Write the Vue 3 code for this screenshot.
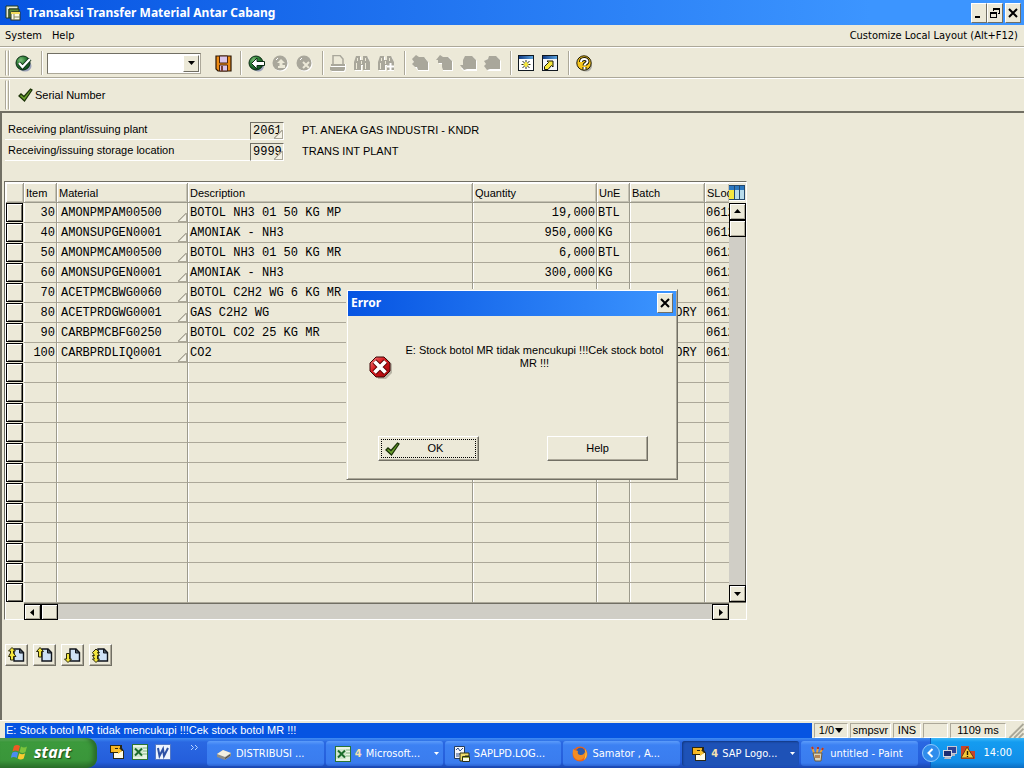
<script setup>
import { ref } from 'vue'

const command = ref('')
const plant = ref('2061')
const storage = ref('9999')

const toolGroups = [
  [
    { id: 'back', label: 'Back' },
    { id: 'exit', label: 'Exit', off: true },
    { id: 'cancel', label: 'Cancel', off: true },
  ],
  [
    { id: 'print', label: 'Print', off: true },
    { id: 'find', label: 'Find', off: true },
    { id: 'findnext', label: 'Find next', off: true },
  ],
  [
    { id: 'pfirst', label: 'First page', off: true },
    { id: 'pprev', label: 'Previous page', off: true },
    { id: 'pnext', label: 'Next page', off: true },
    { id: 'plast', label: 'Last page', off: true },
  ],
  [
    { id: 'session', label: 'New session' },
    { id: 'shortcut', label: 'Create shortcut' },
  ],
  [{ id: 'help', label: 'Help' }],
]

const items = [
  ['30', 'AMONPMPAM00500', 'BOTOL NH3 01 50 KG MP', '19,000', 'BTL', '', '0612'],
  ['40', 'AMONSUPGEN0001', 'AMONIAK - NH3', '950,000', 'KG', '', '0612'],
  ['50', 'AMONPMCAM00500', 'BOTOL NH3 01 50 KG MR', '6,000', 'BTL', '', '0612'],
  ['60', 'AMONSUPGEN0001', 'AMONIAK - NH3', '300,000', 'KG', '', '0612'],
  ['70', 'ACETPMCBWG0060', 'BOTOL C2H2 WG 6 KG MR', '', '', '', '0612'],
  ['80', 'ACETPRDGWG0001', 'GAS C2H2 WG', '', '', 'INVENTORY', '0612'],
  ['90', 'CARBPMCBFG0250', 'BOTOL CO2 25 KG MR', '', '', '', '0612'],
  ['100', 'CARBPRDLIQ0001', 'CO2', '', '', 'INVENTORY', '0612'],
]
const rows = Array.from({ length: 20 }, (_, i) => items[i] || ['', '', '', '', '', '', ''])

const pageButtons = [
  { id: 'first', label: 'First page' },
  { id: 'prev', label: 'Previous page' },
  { id: 'next', label: 'Next page' },
  { id: 'last', label: 'Last page' },
]

const tasks = [
  { icon: 't-drive', text: 'DISTRIBUSI ...' },
  { icon: 't-excel', count: '4', text: 'Microsoft...', more: true },
  { icon: 't-saplpd', text: 'SAPLPD.LOG...' },
  { icon: 't-fox', text: 'Samator , A...' },
  { icon: 't-sap', count: '4', text: 'SAP Logo...', more: true, active: true },
  { icon: 't-paint', text: 'untitled - Paint' },
]
</script>

<template>
  <div class="screen">
    <svg class="defs" aria-hidden="true">
      <defs>
        <radialGradient id="gGreen" cx="35%" cy="30%" r="75%">
          <stop offset="0" stop-color="#7fc07a" />
          <stop offset=".45" stop-color="#2f8038" />
          <stop offset="1" stop-color="#0d4a1c" />
        </radialGradient>
        <linearGradient id="gRed" x1="0" y1="0" x2="1" y2="1">
          <stop offset="0" stop-color="#f58a8a" />
          <stop offset=".4" stop-color="#d81c20" />
          <stop offset="1" stop-color="#9c0408" />
        </linearGradient>
        <linearGradient id="gBlue" x1="0" x2="1">
          <stop offset="0" stop-color="#123c86" />
          <stop offset="1" stop-color="#5aa2dc" />
        </linearGradient>

        <symbol id="window-logo" viewBox="0 0 16 16">
          <path d="M1 1h12v3H4v9H1z" fill="#e8ecd0" stroke="#20381c" />
          <path d="M4 4h10v3H7v6H4z" fill="#5c8a3c" stroke="#20381c" />
          <rect x="6" y="7" width="9" height="8" fill="#f8f8e8" stroke="#30341c" />
          <path d="M6 7h9v2H6z" fill="#f2d95a" />
          <path d="M9 9v6M9 12h6" stroke="#88885c" />
        </symbol>
        <symbol id="ok" viewBox="0 0 17 17">
          <ellipse cx="10" cy="11" rx="6.5" ry="5.5" fill="#9aa0b8" />
          <circle cx="8" cy="8" r="7" fill="url(#gGreen)" stroke="#0c2c14" />
          <path d="M4 8l3.500 4L15 4" fill="none" stroke="#0c2c14" stroke-width="4" />
          <path d="M4 8l3.500 4L15 4" fill="none" stroke="#fff" stroke-width="2.400" />
        </symbol>
        <symbol id="save" viewBox="0 0 17 17">
          <path d="M1 1h15v15H3l-2-2z" fill="#ee8c14" stroke="#281404" stroke-width="1.200" />
          <path d="M4.500 1h8v7h-8z" fill="#d9c4ea" stroke="#4a2410" />
          <path d="M4.500 10h8v6h-8z" fill="#d9c4ea" stroke="#4a2410" />
          <path d="M6 11h2v5H6z" fill="#7a4038" />
        </symbol>
        <symbol id="back" viewBox="0 0 17 17">
          <ellipse cx="10" cy="11" rx="6" ry="5.5" fill="#9aa0b8" />
          <circle cx="8" cy="8" r="7" fill="url(#gGreen)" stroke="#0c2c14" />
          <path d="M3.500 8.500L9 3v3.500h7.500v4H9V14z" fill="#fff" stroke="#0c2c14" />
        </symbol>
        <symbol id="exit" viewBox="0 0 17 17">
          <circle cx="9" cy="9" r="7.500" fill="#fff" />
          <circle cx="8" cy="8" r="7.500" fill="#a9a79b" />
          <path d="M9 4l4 4h-2.500v2H13v3H6v-2h1.500V8H5z" fill="#ece9d8" />
          <path d="M4 5l2-2" stroke="#fff" />
        </symbol>
        <symbol id="cancel" viewBox="0 0 17 17">
          <circle cx="9" cy="9" r="7.500" fill="#fff" />
          <circle cx="8" cy="8" r="7.500" fill="#a9a79b" />
          <path d="M7 7l6 6M13 7l-6 6" stroke="#ece9d8" stroke-width="2" />
          <path d="M4 5l2-2" stroke="#fff" />
        </symbol>
        <symbol id="print" viewBox="0 0 17 17">
          <path d="M5 1h6l2 2v6h3v5l-1 3H2l-1-2V10h3z" fill="#fff" />
          <path d="M3 9V.500h7L13 4v5" fill="#ece9d8" stroke="#a9a79b" stroke-width="1.500" />
          <path d="M1 9h14v2H1zM0 12h15v2l-1 2H2l-2-1z" fill="#a9a79b" />
        </symbol>
        <symbol id="find" viewBox="0 0 17 17">
          <path d="M3 2h4v4h3V2h4l2 6v8h-6v-5H8v5H1V8z" fill="#fff" />
          <path d="M2 1h4v4h3V1h4l3 6v8H9v-5H7v5H0V7z" fill="#a9a79b" />
          <path d="M3.500 3v3M2.500 8v6M11.500 3v3M11.500 8v6M7.500 6v3" stroke="#ece9d8" />
        </symbol>
        <symbol id="findnext" viewBox="0 0 17 17">
          <path d="M3 2h4v4h3V2h4l2 6v8h-6v-5H8v5H1V8z" fill="#fff" />
          <path d="M2 1h4v4h3V1h4l3 6v8H9v-5H7v5H0V7z" fill="#a9a79b" />
          <path d="M3.500 3v3M2.500 8v6M11.500 3v3M7.500 6v3" stroke="#ece9d8" />
          <path d="M12.500 8v7M9 11.500h7" stroke="#fff" stroke-width="2" />
        </symbol>
        <symbol id="pfirst" viewBox="0 0 17 17">
          <path d="M3 2l3 1h7l4 5v8H6l-2-3-3-3 2-2-2-2z" fill="#fff" />
          <path d="M0 4l4-4 3 2h5l4 5v8H6l-1-3H3L0 9l2-2z" fill="#a9a79b" />
        </symbol>
        <symbol id="pprev" viewBox="0 0 17 17">
          <path d="M2 5l4-3h7l4 5v9H7V9H3z" fill="#fff" />
          <path d="M0 5l4-5 3 2h5l4 4v9H7l-1-3V8H2V5z" fill="#a9a79b" />
        </symbol>
        <symbol id="pnext" viewBox="0 0 17 17">
          <path d="M6 2h7l4 4v10H4l-3-3h3z" fill="#fff" />
          <path d="M5 1h7l4 4v9H7l-3 1-4-5h3V5z" fill="#a9a79b" />
        </symbol>
        <symbol id="plast" viewBox="0 0 17 17">
          <path d="M6 2h7l4 4v10H4l-3-4 2-2-2-4z" fill="#fff" />
          <path d="M5 1h7l4 4v9H6l-3 1-3-4 2-2-2-3 4-2z" fill="#a9a79b" />
        </symbol>
        <symbol id="session" viewBox="0 0 17 17">
          <rect x=".5" y=".5" width="15" height="15" fill="#fff" stroke="#101820" />
          <path d="M1 1h14v3H1z" fill="url(#gBlue)" />
          <path d="M8 5v9M3.500 9.500h9M4.500 6l7 7M11.500 6l-7 7" stroke="#2c3020" />
          <path d="M8 7v5M5.500 9.500h5" stroke="#f6e83c" stroke-width="2" />
        </symbol>
        <symbol id="shortcut" viewBox="0 0 17 17">
          <rect x=".5" y=".5" width="15" height="15" fill="#f4f6fa" stroke="#101820" />
          <path d="M1 1h14v3H1z" fill="url(#gBlue)" />
          <path d="M2.500 14.500v-3l4-4L5 6h6v6L9.500 10.500 6 14.500z" fill="#f6e83c" stroke="#181808" />
        </symbol>
        <symbol id="help" viewBox="0 0 17 17">
          <ellipse cx="10" cy="11" rx="6" ry="5.500" fill="#a8a8a0" />
          <circle cx="8" cy="8" r="7.200" fill="#f7c61c" stroke="#1c1804" />
          <path d="M5 7c0-4 6.500-4 6.500-.5 0 2-3 2-3 4M8.500 12v2.500" fill="none" stroke="#1c1804" stroke-width="4" />
          <path d="M5 7c0-4 6.500-4 6.500-.5 0 2-3 2-3 4M8.500 12v2.500" fill="none" stroke="#fff" stroke-width="2" />
        </symbol>
        <symbol id="tick" viewBox="0 0 16 14">
          <path d="M1 8l2-2 3 2.500L12.500 1l1.500 1L6.500 13z" fill="#6aa02c" stroke="#1c3408" stroke-width="1.300" />
        </symbol>
        <symbol id="error" viewBox="0 0 24 24">
          <path d="M8 2h9l6 6v9l-6 6H9z" fill="#b8b5a6" />
          <path d="M7 1h8l6 6v8l-6 6H7l-6-6V7z" fill="url(#gRed)" stroke="#3c0404" />
          <path d="M5.500 5.500l11 11M16.500 5.500l-11 11" stroke="#500" stroke-width="5.500" />
          <path d="M5.500 5.500l11 11M16.500 5.500l-11 11" stroke="#fff" stroke-width="3.800" />
        </symbol>
        <symbol id="columns" viewBox="0 0 16 16">
          <rect width="16" height="16" fill="#fff" />
          <path d="M0 1h16v4H0z" fill="#2c78c0" />
          <path d="M0 5h5v9H0z" fill="#f4e640" />
          <path d="M6 5h4v9H6zM11 5h4v9h-4z" fill="#b8dcec" />
          <path d="M5.500 1v13M10.500 1v13M15.500 1v13M0 .5h16M0 14.500h16" stroke="#24486c" />
        </symbol>

        <symbol id="sheet" viewBox="0 0 17 17">
          <path d="M6 2h6l3.500 3.500V14H6z" fill="#cfe2f6" stroke="#10141c" stroke-width="1.400" />
          <path d="M11.500 2v4h4z" fill="#50606c" stroke="#10141c" />
        </symbol>
        <symbol id="first" viewBox="0 0 17 17">
          <use href="#sheet" />
          <path d="M4 .5L7.500 4H5.500v2L8 9.500H5.500V13h-3V9.500H.5L2.500 6V4h-2z" fill="#f4e63c" stroke="#2a2808" />
        </symbol>
        <symbol id="prev" viewBox="0 0 17 17">
          <use href="#sheet" />
          <path d="M4 .5L7.500 4.500H5.500V10h-3V4.500H.5z" fill="#f4e63c" stroke="#2a2808" />
        </symbol>
        <symbol id="next" viewBox="0 0 17 17">
          <use href="#sheet" />
          <path d="M4 15.500L.5 12h2V6.500h3V12h2z" fill="#f4e63c" stroke="#2a2808" />
        </symbol>
        <symbol id="last" viewBox="0 0 17 17">
          <use href="#sheet" />
          <path d="M4 15.500L.5 12h2L.5 8.500h2L.5 5.500 4 2l3.500 3.500h-2l2 3h-2V12h2z" fill="#f4e63c" stroke="#2a2808" />
        </symbol>

        <symbol id="flag" viewBox="0 0 18 18">
          <path d="M3 3q3-2 6 0L7.500 8.500q-3-2-6 0z" fill="#ee5a24" />
          <path d="M10 3.500q3 2 6 0L14.500 9q-3 2-6 0z" fill="#7cc43c" />
          <path d="M1.200 9.700q3-2 6 0L5.700 15q-3-2-6 0z" fill="#4a8cf0" />
          <path d="M8.200 10.200q3 2 6 0L12.700 15.500q-3 2-6 0z" fill="#f8cc30" />
        </symbol>
        <symbol id="t-sap" viewBox="0 0 16 16">
          <path d="M1 1h12v3l2 3v8H4V9H1z" fill="#2c2814" />
          <path d="M2 2h9v2H6v4H2z" fill="#f5b422" />
          <path d="M5 9h4l4-2h1v7H5z" fill="#fffbe6" />
          <path d="M5 5h4V3l4 4-4 3V8H5z" fill="#f9c02c" />
        </symbol>
        <symbol id="t-excel" viewBox="0 0 16 16">
          <rect x=".5" y=".5" width="15" height="15" fill="#e8f4e4" stroke="#2c7434" />
          <path d="M11 4h4M11 7h4M11 10h4" stroke="#7cb47c" />
          <rect x="1" y="3" width="10" height="10" fill="#cfe6cc" />
          <path d="M3 4.500l7 7M10 4.500l-7 7" stroke="#1c6c2c" stroke-width="2" />
        </symbol>
        <symbol id="t-word" viewBox="0 0 16 16">
          <rect x=".5" y=".5" width="15" height="15" fill="#eef4fe" stroke="#5478c4" />
          <path d="M3 4l1.500 8L8 5l1 7 4-8" fill="none" stroke="#2c50a4" stroke-width="2" />
        </symbol>
        <symbol id="t-drive" viewBox="0 0 16 16">
          <path d="M1 8l6-4 8 3v3l-6 4-8-3z" fill="#8c8c88" />
          <path d="M1 8l6-4 8 3-6 4z" fill="#f2efe2" />
          <path d="M9 12.500l5-3.500" stroke="#4c4c48" />
        </symbol>
        <symbol id="t-saplpd" viewBox="0 0 16 16">
          <path d="M.5.500h10v12H.5z" fill="#f4f6fa" stroke="#243c5c" />
          <path d="M2 4l2-2 2 3 3-3M2 8h5M2 10h3" fill="none" stroke="#2c4c8c" />
          <path d="M6 7h9v3h-4v5H6z" fill="#f0dc6c" stroke="#2c3014" />
          <path d="M8.500 10.500h7v5h-7z" fill="#fbfbe4" stroke="#2c3014" />
          <path d="M9 11h6v1H9z" fill="#9aa83c" />
        </symbol>
        <symbol id="t-fox" viewBox="0 0 16 16">
          <circle cx="8" cy="8" r="7.500" fill="#e8641c" />
          <circle cx="8.500" cy="6.500" r="4.700" fill="#2c5cae" />
          <path d="M1 3c2 2 3 1 5 2-1 3 1 4 3 4 2 0 3-1 4-3 1 5-2 8-6 8-4 0-7-4-6-11z" fill="#f28c24" />
          <path d="M13 3c3 4 2 9-1 11 1-3 2-6 1-11z" fill="#fbc63c" />
        </symbol>
        <symbol id="t-paint" viewBox="0 0 16 16">
          <path d="M4 7L2 1M7 7l1-6M10 7l3-5" stroke="#e8a43c" stroke-width="2" />
          <path d="M2 1l1 2M8 1v2M13 2l-1 2" stroke="#b4342c" stroke-width="2" />
          <path d="M3 7h9l-1 8H5z" fill="#d9d2ba" stroke="#6c5c3c" />
          <path d="M5 9h5v3H5z" fill="#b48454" />
        </symbol>
        <symbol id="t-net" viewBox="0 0 16 16">
          <rect x="5.500" y="1.500" width="9" height="7" fill="#2c4498" stroke="#c4c8d4" />
          <path d="M8 9h5v2H8z" fill="#b4b8c4" />
          <rect x="1.500" y="5.500" width="8" height="6" fill="#1c2c70" stroke="#d4d8e0" />
          <path d="M3 12h6v2H2z" fill="#b4b8c4" />
        </symbol>
        <symbol id="t-warn" viewBox="0 0 16 16">
          <path d="M1 1h8v5h6v8H1z" fill="#c8442c" />
          <path d="M7 2l7 11H1z" fill="#f6c838" stroke="#6c3c10" />
          <path d="M7.500 6v4M7.500 11v1" stroke="#201804" stroke-width="1.400" />
        </symbol>
      </defs>
    </svg>

    <header class="titlebar">
      <svg class="i16"><use href="#window-logo" /></svg>
      <h1>Transaksi Transfer Material Antar Cabang</h1>
      <button class="winbtn" aria-label="Minimize">
        <svg viewBox="0 0 12 12"><path d="M2 9h5v2H2z" /></svg>
      </button>
      <button class="winbtn" aria-label="Restore">
        <svg viewBox="0 0 12 12"><path d="M4 1h7v6H9V6h1V3H5v1H4zM1 5h7v6H1zM2 7v3h5V7z" fill-rule="evenodd" /></svg>
      </button>
      <button class="winbtn close" aria-label="Close">
        <svg viewBox="0 0 12 12"><path d="M2 2l8 8M10 2l-8 8" stroke="#000" stroke-width="2" /></svg>
      </button>
    </header>

    <nav class="menubar">
      <button>System</button>
      <button>Help</button>
      <button class="layout">Customize Local Layout (Alt+F12)</button>
    </nav>

    <div class="toolbar">
      <span class="grip"></span>
      <button class="tool" aria-label="Enter"><svg class="i17"><use href="#ok" /></svg></button>
      <div class="group command">
        <div class="combo">
          <input v-model="command" type="text" aria-label="Command" />
          <button aria-label="Command history"><svg viewBox="0 0 7 4"><path d="M0 0h7L3.500 4z" /></svg></button>
        </div>
        <button class="tool" aria-label="Save"><svg class="i17"><use href="#save" /></svg></button>
      </div>
      <div v-for="(g, i) in toolGroups" :key="i" class="group">
        <button v-for="t in g" :key="t.id" class="tool" :aria-label="t.label" :disabled="t.off">
          <svg class="i17"><use :href="'#' + t.id" /></svg>
        </button>
      </div>
    </div>

    <div class="toolbar second">
      <span class="grip"></span>
      <button class="serial"><svg><use href="#tick" /></svg>Serial Number</button>
    </div>

    <main class="content">
      <div class="field">
        <label for="plant">Receiving plant/issuing plant</label>
        <span class="box"><input id="plant" v-model="plant" type="text" /></span>
        <span class="desc">PT. ANEKA GAS INDUSTRI - KNDR</span>
      </div>
      <div class="field">
        <label for="storage">Receiving/issuing storage location</label>
        <span class="box"><input id="storage" v-model="storage" type="text" /></span>
        <span class="desc">TRANS INT PLANT</span>
      </div>

      <div class="grid">
        <table>
          <colgroup>
            <col class="c-sel" /><col class="c-item" /><col class="c-mat" /><col /><col class="c-qty" />
            <col class="c-une" /><col class="c-batch" /><col class="c-sloc" />
          </colgroup>
          <thead>
            <tr>
              <th></th><th>Item</th><th>Material</th><th>Description</th><th>Quantity</th>
              <th>UnE</th><th>Batch</th><th>SLoc</th>
            </tr>
          </thead>
          <tbody>
            <tr v-for="(r, i) in rows" :key="i">
              <td class="sel"><button :aria-label="'Select row ' + (i + 1)"></button></td>
              <td class="num">{{ r[0] }}</td>
              <td class="mat" :class="{ filled: r[1] }">{{ r[1] }}</td>
              <td>{{ r[2] }}</td>
              <td class="num">{{ r[3] }}</td>
              <td class="tight">{{ r[4] }}</td>
              <td>{{ r[5] }}</td>
              <td class="tight">{{ r[6] }}</td>
            </tr>
          </tbody>
        </table>
        <div class="vside">
          <button class="config" aria-label="Table settings"><svg class="i16"><use href="#columns" /></svg></button>
          <div class="vscroll">
            <button aria-label="Scroll up"><svg viewBox="0 0 7 7"><path d="M0 5h7L3.500 1z" /></svg></button>
            <span class="thumb"></span>
            <button class="end" aria-label="Scroll down"><svg viewBox="0 0 7 7"><path d="M0 2h7L3.500 6z" /></svg></button>
          </div>
        </div>
        <div class="hside">
          <div class="hscroll">
            <button aria-label="Scroll left"><svg viewBox="0 0 7 7"><path d="M5 0v7L1 3.500z" /></svg></button>
            <span class="thumb"></span>
            <button class="end" aria-label="Scroll right"><svg viewBox="0 0 7 7"><path d="M2 0v7l4-3.500z" /></svg></button>
          </div>
        </div>
      </div>

      <div class="pager">
        <button v-for="b in pageButtons" :key="b.id" :aria-label="b.label">
          <svg class="i17"><use :href="'#' + b.id" /></svg>
        </button>
      </div>
    </main>

    <footer class="status">
      <span class="msg">E: Stock botol MR tidak mencukupi !!!Cek stock botol MR !!!</span>
      <span class="pane p-sess">1/0<svg viewBox="0 0 8 5"><path d="M0 0h8L4 5z" /></svg></span>
      <span class="pane p-host">smpsvr</span>
      <span class="pane p-ins">INS</span>
      <span class="pane p-blank"></span>
      <span class="pane p-time">1109 ms</span>
      <svg class="sizer" viewBox="0 0 16 16"><path d="M1 16L16 1M6 16L16 6M11 16l5-5" stroke="#a9a798" stroke-width="2" /></svg>
    </footer>

    <div class="taskbar">
      <button class="start"><svg><use href="#flag" /></svg>start</button>
      <div class="quick">
        <button aria-label="SAP Logon"><svg class="i16"><use href="#t-sap" /></svg></button>
        <button aria-label="Excel"><svg class="i16"><use href="#t-excel" /></svg></button>
        <button aria-label="Word"><svg class="i16"><use href="#t-word" /></svg></button>
        <button class="chev" aria-label="More"><svg viewBox="0 0 9 7"><path d="M1 1l2.500 2.500L1 6M5 1l2.500 2.500L5 6" fill="none" stroke="#b8d4ff" /></svg></button>
      </div>
      <div class="tasks">
        <button v-for="t in tasks" :key="t.text" class="task" :class="{ active: t.active }">
          <svg class="i16"><use :href="'#' + t.icon" /></svg>
          <b v-if="t.count">{{ t.count }}</b>
          <span>{{ t.text }}</span>
          <svg v-if="t.more" class="more" viewBox="0 0 5 3"><path d="M0 0h5L2.500 3z" fill="#fff" /></svg>
        </button>
      </div>
      <div class="tray">
        <button class="hide" aria-label="Show hidden icons">
          <svg viewBox="0 0 18 18">
            <circle cx="9" cy="9" r="8.500" fill="#2f8cec" stroke="#8cc8fc" />
            <path d="M10.500 5L6.500 9l4 4" fill="none" stroke="#fff" stroke-width="2" />
          </svg>
        </button>
        <svg class="i16"><use href="#t-net" /></svg>
        <svg class="i16"><use href="#t-warn" /></svg>
        <time>14:00</time>
      </div>
    </div>

    <div class="overlay">
      <section class="dialog" role="dialog" aria-labelledby="dlg-title">
        <div class="dlg-title">
          <h2 id="dlg-title">Error</h2>
          <button class="winbtn" aria-label="Close dialog">
            <svg viewBox="0 0 12 12"><path d="M2 2l8 8M10 2l-8 8" stroke="#000" stroke-width="2" /></svg>
          </button>
        </div>
        <div class="dlg-body">
          <svg class="err"><use href="#error" /></svg>
          <p>E: Stock botol MR tidak mencukupi !!!Cek stock botol MR !!!</p>
        </div>
        <div class="dlg-actions">
          <button class="default"><span><svg><use href="#tick" /></svg>OK</span></button>
          <button>Help</button>
        </div>
      </section>
    </div>
  </div>
</template>

<style>
body {
  margin: 0;
  background: #ece9d8;
}
</style>

<style scoped>
* {
  box-sizing: border-box;
}
.screen {
  display: flex;
  flex-direction: column;
  min-height: 100vh;
  background: #ece9d8;
  color: #000;
  font: 11px/13px "Liberation Sans", Arial, sans-serif;
}
button,
input {
  margin: 0;
  padding: 0;
  border: 0;
  background: none;
  font: inherit;
  color: inherit;
  border-radius: 0;
}
svg {
  display: block;
  flex: none;
}
.defs {
  position: absolute;
  width: 0;
  height: 0;
}
.i16 {
  width: 16px;
  height: 16px;
}
.i17 {
  width: 17px;
  height: 17px;
}

.titlebar {
  display: flex;
  align-items: center;
  height: 25px;
  padding: 0 3px 0 5px;
  background: linear-gradient(90deg, #0654e2, #3c95ff 85%);
  color: #fff;
}
h1,
h2 {
  flex: 1;
  margin: 0;
  font: bold 12px/16px "Noto Sans", sans-serif;
}
h1 {
  margin-left: 6px;
}
.winbtn {
  display: grid;
  place-items: center;
  width: 16px;
  height: 20px;
  background: #ece9d8;
  border: 1px solid;
  border-color: #fff #716f64 #716f64 #fff;
}
.winbtn svg {
  width: 12px;
  height: 12px;
}
.winbtn.close {
  margin-left: 2px;
}

.menubar {
  display: flex;
  height: 22px;
  padding: 0 6px 1px 5px;
  gap: 10px;
  border-bottom: 1px solid #aca899;
  font: 11px/13px "DejaVu Sans Condensed", "Noto Sans", sans-serif;
}
.menubar .layout {
  margin-left: auto;
}

.toolbar {
  display: flex;
  align-items: center;
  height: 31px;
  padding: 1px 0 0 5px;
  border-top: 1px solid #fff;
  border-bottom: 1px solid #aca899;
}
.toolbar.second {
  height: 33px;
  padding-top: 0;
  border-bottom: 0;
}
.grip {
  align-self: stretch;
  width: 4px;
  margin: 1px 2px 1px 0;
  border: 1px solid;
  border-color: transparent #aca899 transparent #aca899;
  box-shadow: inset 1px 0 #fff, 1px 0 #fff;
}
.tool {
  display: grid;
  place-items: center;
  width: 24px;
  height: 24px;
}
.group {
  display: flex;
  align-items: center;
  padding: 0 5px 0 3px;
  border-left: 1px solid #aca899;
  box-shadow: inset 1px 0 #fff;
  margin-right: 1px;
}
.group:last-child {
  margin-right: 0;
}
.group.command {
  margin-left: 6px;
  padding: 0 4px 0 5px;
  gap: 10px;
}
.combo {
  display: flex;
  width: 154px;
  height: 21px;
  padding: 1px;
  background: #fff;
  border: 1px solid;
  border-color: #716f64 #aca899 #aca899 #716f64;
}
.combo input {
  flex: 1;
  min-width: 0;
  padding: 0 3px;
  outline: 0;
}
.combo button {
  display: grid;
  place-items: center;
  width: 16px;
  background: #ece9d8;
  border: 1px solid;
  border-color: #fff #716f64 #716f64 #fff;
}
.combo svg {
  width: 7px;
  height: 4px;
}
.serial {
  display: flex;
  align-items: center;
  gap: 1px;
  margin-left: 7px;
}
.serial svg {
  width: 16px;
  height: 14px;
}

.content {
  flex: 1;
  padding: 8px 4px 0 3px;
  border: 0 solid #716f64;
  border-top-width: 2px;
  border-left-width: 2px;
}
.field {
  display: flex;
  align-items: center;
  height: 19px;
  margin-bottom: 2px;
}
.field label {
  width: 245px;
  padding: 2px 0 3px 3px;
  border-bottom: 1px solid #fff;
}
.field .box {
  position: relative;
  width: 34px;
  height: 18px;
  border: 1px solid;
  border-color: #716f64 #fff #fff #716f64;
}
.box::after,
.filled::after {
  content: "";
  position: absolute;
  right: 0;
  bottom: 0;
  width: 8px;
  height: 8px;
  background: linear-gradient(135deg, transparent 45%, #aca899 46%, #aca899 56%, #f4f2e6 57%);
  border-right: 1px solid #aca899;
  border-bottom: 1px solid #aca899;
}
.field input {
  display: block;
  width: 100%;
  height: 16px;
  padding-left: 2px;
  font: 12px/16px "Liberation Mono", monospace;
}
.desc {
  margin-left: 18px;
}

.grid {
  display: grid;
  grid-template-columns: minmax(0, 1fr) 17px;
  max-width: 743px;
  margin: 20px 0 24px -1px;
  border: 1px solid;
  border-color: #716f64 #fff #fff #716f64;
  box-shadow: inset 1px 1px #fff;
  padding: 1px 0 0 1px;
}
table {
  width: 100%;
  table-layout: fixed;
  border-collapse: separate;
  border-spacing: 0;
}
.c-sel { width: 18px; }
.c-item { width: 33px; }
.c-mat { width: 131px; }
.c-qty { width: 124px; }
.c-une { width: 33px; }
.c-batch { width: 75px; }
.c-sloc { width: 24px; }
th {
  height: 20px;
  padding: 2px 0 0 2px;
  text-align: left;
  font-weight: normal;
  overflow: hidden;
  border-right: 1px solid #9c9a8c;
  border-bottom: 1px solid #9c9a8c;
  box-shadow: inset 1px 1px #fff, inset -1px -1px #c4c1b2;
}
td {
  position: relative;
  height: 20px;
  padding: 0 0 0 2px;
  overflow: hidden;
  white-space: nowrap;
  font: 12px/18px "Liberation Mono", monospace;
  border-right: 1px solid #9c9a8c;
  border-bottom: 1px solid #aca899;
  box-shadow: inset 1px 0 #fff;
}
th:last-child,
td:last-child {
  border-right: 0;
}
td.num {
  padding: 0 1px 0 0;
  text-align: right;
}
td.mat {
  padding-left: 4px;
}
td.tight {
  padding-left: 1px;
}
td.sel {
  padding: 0;
  border: 0;
  vertical-align: top;
}
.sel button {
  display: block;
  width: 17px;
  height: 19px;
  border: 1px solid #000;
  box-shadow: inset 1px 1px #fff, inset -1px -1px #716f64;
}
.vside {
  display: flex;
  flex-direction: column;
}
.config {
  height: 20px;
}
.vscroll,
.hscroll {
  display: flex;
  background: #d0cec6;
}
.vscroll {
  flex: 1;
  flex-direction: column;
  border: 0 solid #716f64;
  border-width: 0 1px 1px 0;
}
.hside {
  grid-column: 1 / -1;
  padding: 0 17px 0 18px;
}
.hscroll {
  height: 16px;
  border-top: 1px solid #716f64;
}
.vscroll button,
.hscroll button,
.thumb {
  display: grid;
  place-items: center;
  width: 17px;
  height: 17px;
  background: #ece9d8;
  border: 1px solid #000;
  box-shadow: inset 1px 1px #fff, inset -1px -1px #aca899;
}
.vscroll > * {
  margin-right: -1px;
}
.hscroll button,
.hscroll .thumb {
  height: 16px;
}
.vscroll svg,
.hscroll svg {
  width: 7px;
  height: 7px;
}
.vscroll .end {
  margin-top: auto;
}
.hscroll .end {
  margin-left: auto;
}

.pager {
  display: flex;
  gap: 5px;
}
.pager button {
  display: grid;
  place-items: center;
  width: 23px;
  height: 22px;
  border: 1px solid;
  border-color: #fff #716f64 #716f64 #fff;
  box-shadow: inset -1px -1px #aca899;
}

.status {
  display: flex;
  align-items: stretch;
  gap: 2px;
  height: 18px;
  padding: 2px 0 0 5px;
  border-top: 1px solid #fff;
}
.msg {
  flex: 1;
  padding: 1px 0 0 1px;
  background: #0654e2;
  color: #fff;
  white-space: nowrap;
  overflow: hidden;
}
.pane {
  display: flex;
  align-items: center;
  justify-content: center;
  border: 1px solid;
  border-color: #aca899 #fff #fff #aca899;
}
.pane svg {
  width: 8px;
  height: 5px;
  margin-left: 1px;
}
.p-sess { width: 34px; }
.p-host { width: 41px; }
.p-ins { width: 28px; }
.p-blank { width: 25px; }
.p-time { width: 56px; }
.sizer {
  width: 16px;
  height: 15px;
}

.taskbar {
  display: flex;
  height: 30px;
  background: linear-gradient(#3f8cf3 0, #2a68e2 4px, #245edb 24px, #1a46ae);
  color: #fff;
  font: 11px/14px "DejaVu Sans Condensed", "Noto Sans", sans-serif;
}
.start {
  display: flex;
  align-items: center;
  gap: 5px;
  width: 97px;
  padding: 0 0 2px 11px;
  border-radius: 0 10px 10px 0;
  background: linear-gradient(#6cb86c 0, #3c9a3c 4px, #3a963a 22px, #2a702a);
  box-shadow: inset -4px 0 4px #2a6c2a;
  font: italic bold 16px/20px "Open Sans", sans-serif;
  text-shadow: 1px 1px 1px #1c4c1c;
}
.start svg {
  width: 18px;
  height: 18px;
}
.quick {
  display: flex;
  align-items: center;
  gap: 7px;
  width: 110px;
  padding: 0 0 2px 12px;
}
.chev {
  align-self: flex-start;
  margin: 6px 0 0 12px;
}
.chev svg {
  width: 9px;
  height: 7px;
}
.tasks {
  flex: 1;
  display: flex;
  gap: 2px;
  min-width: 0;
  padding: 3px 12px 2px 0;
}
.task {
  flex: 1;
  min-width: 0;
  display: flex;
  align-items: center;
  gap: 4px;
  padding: 0 4px 0 9px;
  border-radius: 3px;
  background: linear-gradient(#5c9cfa 0, #3c81f3 4px, #3a7cee 22px, #2c64d4);
  white-space: nowrap;
  text-align: left;
}
.task.active {
  background: #1e52b7;
  box-shadow: inset 1px 1px 2px #123882;
}
.task b {
  color: #f5e2b0;
}
.task .more {
  width: 5px;
  height: 3px;
  margin-left: auto;
}
.tray {
  display: flex;
  align-items: center;
  gap: 2px;
  width: 94px;
  padding-right: 12px;
  border-left: 1px solid #0c58b8;
  background: linear-gradient(#3cb8f8 0, #149cf0 4px, #128ee8 24px, #0c6cc0);
}
.hide {
  margin-left: -9px;
}
.hide svg {
  width: 18px;
  height: 18px;
}
.tray time {
  margin-left: auto;
}

.overlay {
  position: fixed;
  inset: 0;
  display: grid;
  place-items: center;
}
.dialog {
  width: 332px;
  padding: 1px;
  background: #ece9d8;
  border: 1px solid;
  border-color: #ece9d8 #716f64 #716f64 #ece9d8;
  box-shadow: inset 1px 1px #fff, inset -1px -1px #aca899;
}
.dlg-title {
  display: flex;
  align-items: center;
  height: 25px;
  padding: 0 3px;
  background: linear-gradient(90deg, #0654e2, #3c95ff);
  color: #fff;
}
.dlg-body {
  display: flex;
  height: 118px;
  padding: 28px 8px 0 21px;
}
.err {
  width: 24px;
  height: 24px;
  margin-top: 12px;
}
.dlg-body p {
  width: 268px;
  margin: 0 0 0 8px;
  text-align: center;
}
.dlg-actions {
  display: flex;
  justify-content: space-between;
  padding: 2px 28px 17px 30px;
}
.dlg-actions button {
  width: 101px;
  height: 25px;
  padding: 1px;
  border: 1px solid;
  border-color: #fff #716f64 #716f64 #fff;
  box-shadow: inset -1px -1px #aca899;
}
.default span {
  position: relative;
  display: grid;
  place-items: center;
  height: 19px;
  margin: 0 1px;
  padding-left: 14px;
  border: 1px dotted #000;
}
.default svg {
  position: absolute;
  left: 3px;
  top: 2px;
  width: 16px;
  height: 14px;
}
</style>
